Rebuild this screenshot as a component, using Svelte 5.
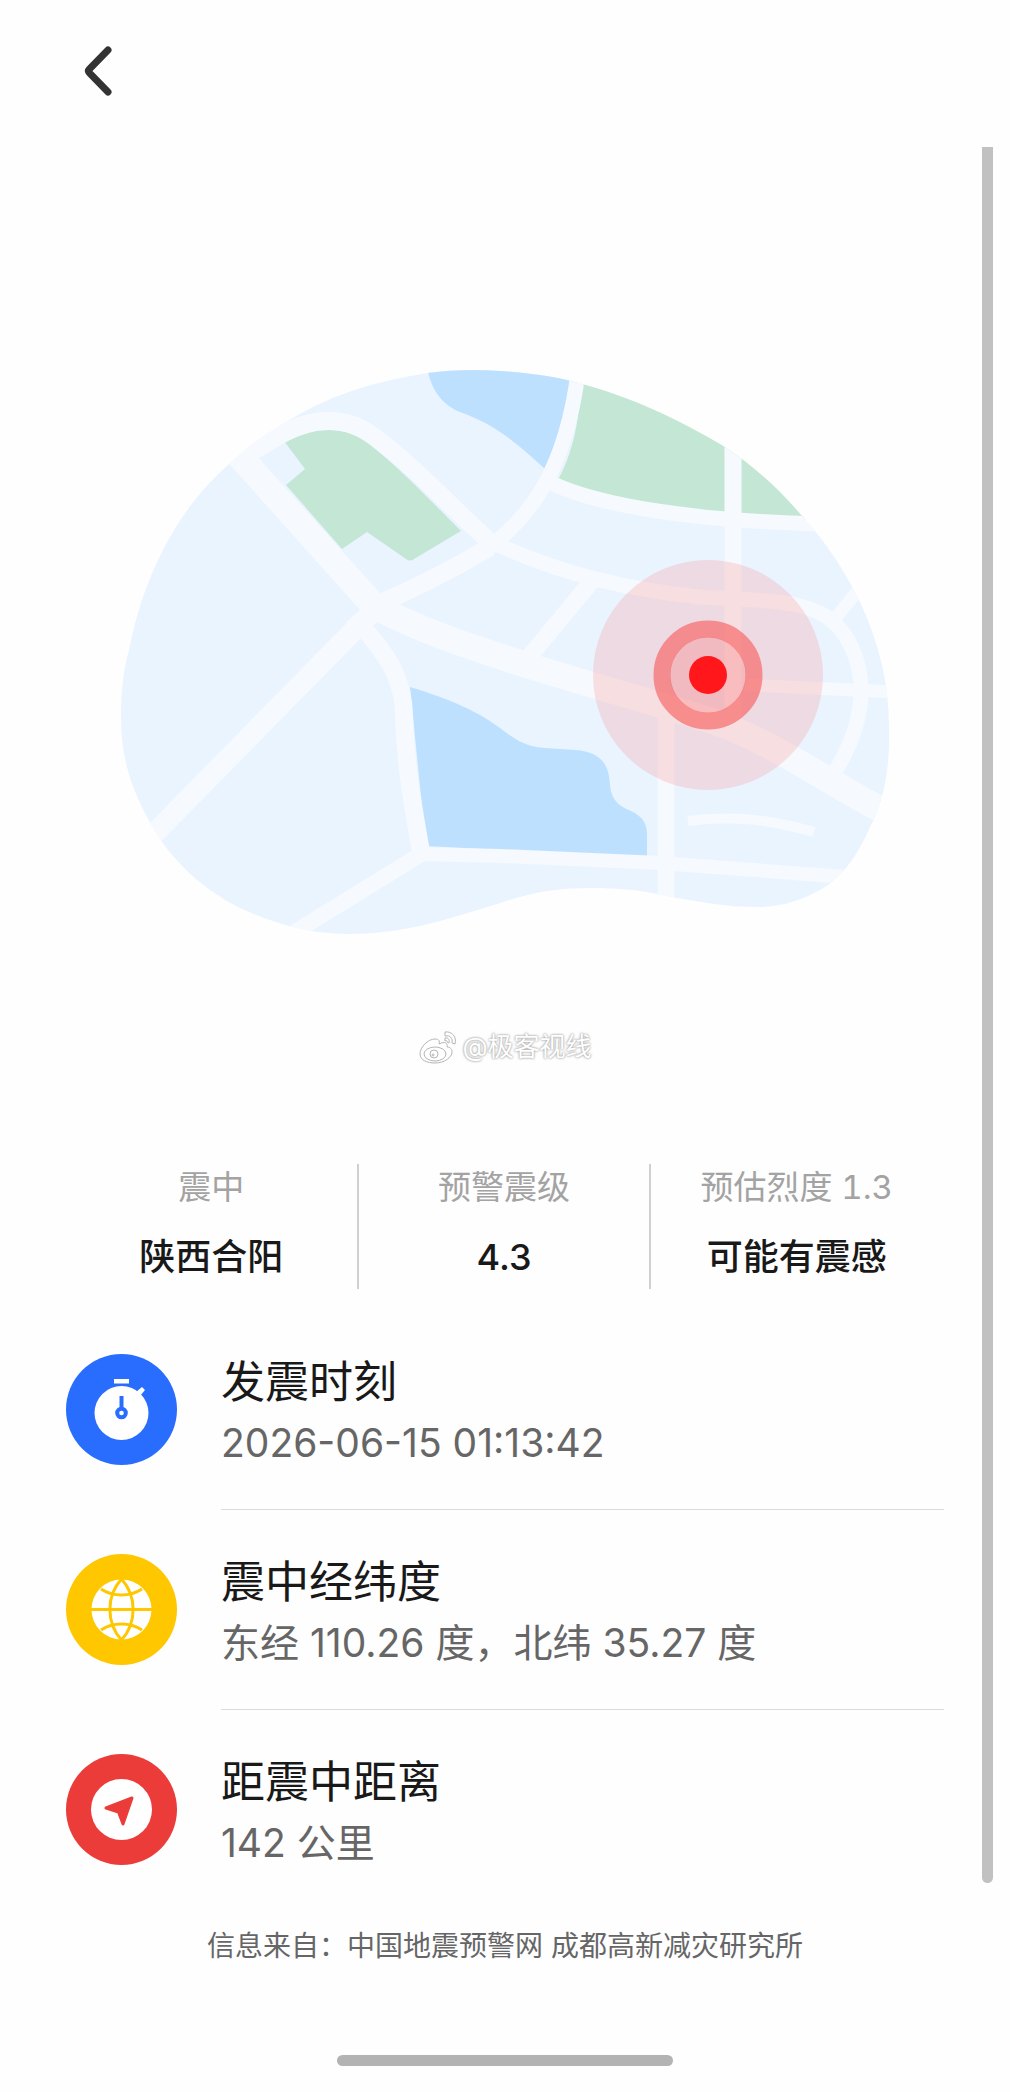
<script>
  const stats = [
    { label: '震中', value: '陕西合阳' },
    { label: '预警震级', value: '4.3' },
    { label: '预估烈度 1.3', value: '可能有震感' }
  ];
  const details = [
    { icon: 'clock', title: '发震时刻', text: '2026-06-15 01:13:42' },
    { icon: 'globe', title: '震中经纬度', text: '东经 110.26 度，北纬 35.27 度' },
    { icon: 'arrow', title: '距震中距离', text: '142 公里' }
  ];
</script>

<div class="page">
  <header>
    <button class="back" type="button" aria-label="返回">
      <svg viewBox="0 0 60 60" aria-hidden="true"><path d="M40 9 L21.500 28 Q19.500 30 21.500 32 L40 51" /></svg>
    </button>
  </header>

  <div class="body">
    <main>
      <svg class="map" viewBox="105 350 800 600" role="img" aria-label="震中位置地图">
        <defs>
          <clipPath id="land">
            <path d="M121 717 C121 690 124 667 129 650 C136 615 146 583 163 550 C180 517 200 490 228 465 C247 447 268 432 293 418 C335 393 375 382 427 373 C450 370 475 369 500 371 C530 373 550 376 571 381 C630 396 680 420 725 447 C755 467 780 490 802 516 C822 538 836 558 850 583 C862 604 871 626 878 650 C886 677 889 703 889 730 C890 773 882 805 870 827 C857 857 843 875 825 887 C802 901 780 907 757 907 C725 907 700 902 667 896 C640 890 620 888 590 888 C555 888 530 893 500 903 C440 922 400 934 347 934 C310 934 275 924 240 908 C205 890 183 870 162 842 C135 800 121 765 121 717Z" />
          </clipPath>
        </defs>
        <g clip-path="url(#land)">
          <path class="ground" d="M105 350H905V950H105Z" />
          <path class="water" d="M426 360 C429 390 443 405 460 412 C497 425 520 446 545 469 L570 440 L580 360Z" />
          <path class="water" d="M410 687 C450 699 480 712 504 731 C520 743 530 747 545 748 L575 750 C600 752 609 763 610 785 C611 800 620 807 631 811 C644 817 647 825 647 835 V857 L426 846Z" />
          <path class="park" d="M284 441 C300 433 313 430 330 430 C345 430 356 434 369 444 C400 468 430 500 461 531 L414 559 Q410 562 406 559 L367 532 L342 549 L286 485 L305 469Z" />
          <path class="park" d="M557 482 C580 440 580 400 582 360 H840 V520 H810 C710 518 630 508 557 482Z" />
          <g class="roads">
            <path class="w26" d="M218 432 L374 606 C425 633 475 648 520 663 C590 685 660 704 715 722 C775 743 835 787 895 817" />
            <path class="w21" d="M140 848 L376 608" />
            <path class="w18" d="M243 457 L272 440 C310 416 345 414 376 438 C415 467 450 506 490 542" />
            <path class="w15" d="M484 538 C550 571 620 589 700 597 C760 601 800 599 827 617 C849 632 861 662 861 690 C861 720 850 747 836 770" />
            <path class="w18" d="M374 606 Q435 580 490 547" />
            <path class="w15" d="M487 549 C530 517 567 470 579 365" />
            <path class="w15" d="M549 482 C600 507 700 521 820 524" />
            <path class="w17" d="M733 430 V732" />
            <path class="w13" d="M745 685 L895 692" />
            <path class="w13" d="M834 620 L872 573" />
            <path class="w17" d="M592 581 L528 658" />
            <path class="w18" d="M353 616 L372 638 C393 664 403 684 404 715 C405 760 411 795 421 852" />
            <path class="w16" d="M423 853 L290 935" />
            <path class="w14" d="M418 854 L500 856 L660 863 L860 878" />
            <path class="w17" d="M666 712 V905" />
            <path class="w10" d="M688 821 C728 816 765 818 814 832" />
          </g>
        </g>
        <circle class="wave" cx="708" cy="675" r="115" />
        <circle class="ring" cx="708" cy="675" r="46" />
        <circle class="core" cx="708" cy="675" r="38" />
        <circle class="dot" cx="708" cy="675" r="19" />
      </svg>

      <p class="credit">
        <svg viewBox="0 0 40 36" aria-hidden="true">
          <path d="M17 10 C10 10 2 18 2 25 C2 31 9 34 17 34 C27 34 34 28 34 23 C34 19 31 18 29 18 C30 14 27 12 21 15 C22 12 21 10 17 10Z" />
          <ellipse cx="17" cy="25" rx="11" ry="7" />
          <circle cx="16" cy="25" r="4" /><circle cx="15" cy="26" r="1" />
          <path d="M27 3 C34 2 39 8 37 15 L34 14 C35 9 32 6 27 7Z M27 9 C30 8 32 11 31 14 L29 13 C29 12 29 11 27 12Z" />
        </svg>
        <span>@极客视线</span>
      </p>

      <dl class="stats">
        {#each stats as s}
          <div><dt>{s.label}</dt><dd>{s.value}</dd></div>
        {/each}
      </dl>

      <ul class="details">
        {#each details as d}
          <li>
            <svg class="badge {d.icon}" viewBox="0 0 111 111" aria-hidden="true">
              <circle class="disc" cx="55.500" cy="55.500" r="55.500" />
              {#if d.icon === 'clock'}
                <circle class="white" cx="55.500" cy="59" r="27" />
                <path class="white" d="M48 25H63V29.500H48Z M70 38 L76 33 L79 36 L74 42Z" />
                <path class="hand" d="M55.500 42V55" />
                <circle class="pivot" cx="55.500" cy="59" r="4.300" />
              {:else if d.icon === 'globe'}
                <circle class="white" cx="55.500" cy="55.500" r="30" />
                <path class="grid" d="M25 55.500H86 M55.500 25 C40 42 40 69 55.500 86 C71 69 71 42 55.500 25 M35 35 C47 43 64 43 76 35 M35 76 C47 68 64 68 76 76" />
              {:else}
                <circle class="white" cx="55.500" cy="55.500" r="30.500" />
                <path class="pointer" d="M40 54 L66 44 L57 70 L52.500 58Z" />
              {/if}
            </svg>
            <div class="info">
              <h2>{d.title}</h2>
              <p>{d.text}</p>
            </div>
          </li>
        {/each}
      </ul>
    </main>
    <div class="scrollbar"></div>
  </div>

  <footer>
    <p>信息来自：中国地震预警网 成都高新减灾研究所</p>
    <div class="home"></div>
  </footer>
</div>

<style>
  :global(body) { margin: 0; background: #fefefe; }
  .page {
    min-height: 100vh;
    display: flex;
    flex-direction: column;
    box-sizing: border-box;
    font-family: Inter, "Noto Sans CJK SC", sans-serif;
    color: #191919;
  }
  p, h2, dl, dd, ul { margin: 0; padding: 0; }
  header { padding: 41px 68px 46px; }
  .back { display: block; width: 60px; height: 60px; padding: 0; border: 0; background: none; }
  .back svg { display: block; width: 60px; height: 60px; }
  .back path { fill: none; stroke: #333; stroke-width: 7; stroke-linecap: round; }
  .body { display: flex; padding-right: 17px; }
  main { flex: 1; min-width: 0; padding: 203px 38px 0 66px; }
  .scrollbar { width: 11px; background: #c1c1c1; border-radius: 0 0 6px 6px; }

  .map { display: block; width: 100%; max-width: 800px; margin: 0 auto; }
  .ground { fill: #e9f4ff; }
  .water { fill: #bee0ff; }
  .park { fill: #c4e7d5; }
  .roads path { fill: none; stroke: #f6f9fe; }
  .roads .w10 { stroke-width: 10; }
  .roads .w13 { stroke-width: 13; }
  .roads .w14 { stroke-width: 14; }
  .roads .w15 { stroke-width: 15; }
  .roads .w16 { stroke-width: 16; }
  .roads .w17 { stroke-width: 17; }
  .roads .w18 { stroke-width: 18; }
  .roads .w21 { stroke-width: 21; }
  .roads .w26 { stroke-width: 26; }
  .wave { fill: rgba(255, 114, 110, 0.2); }
  .ring { fill: none; stroke: rgba(250, 60, 60, 0.5); stroke-width: 17; }
  .core { fill: rgba(255, 90, 90, 0.25); }
  .dot { fill: #ff171b; }

  .credit {
    display: flex;
    align-items: center;
    justify-content: center;
    gap: 4px;
    height: 40px;
    margin-top: 77px;
    font-size: 26px;
    line-height: 40px;
    color: #fff;
    text-shadow: 0 0 2px #999, 0 0 3px #bbb;
  }
  .credit svg { width: 40px; height: 36px; fill: #fff; stroke: #b5b5b5; stroke-width: 1; }

  .stats { display: grid; grid-template-columns: repeat(3, 1fr); margin-top: 97px; text-align: center; }
  .stats div { padding-bottom: 7px; border-right: 2px solid #d0d0d0; }
  .stats div:last-child { border-right-color: transparent; }
  dt { font-size: 33px; line-height: 46px; color: #a3a3a3; font-variant-numeric: tabular-nums; }
  dd { margin-top: 22px; font-size: 36px; line-height: 50px; font-weight: 500; }

  .details { margin-top: 21px; list-style: none; }
  .details li { display: flex; gap: 44px; }
  .badge { flex: none; width: 111px; height: 111px; margin-top: 44px; }
  .info { flex: 1; min-width: 0; padding: 41px 0 36px; border-bottom: 1px solid #dcdcdc; }
  li:last-child .info { padding-bottom: 10px; border-bottom: 0; }
  h2 { font-size: 44px; line-height: 62px; font-weight: 400; }
  .info p { font-size: 39px; line-height: 60px; color: #666; }
  .white { fill: #fff; }
  .clock .disc { fill: #296dff; }
  .globe .disc { fill: #fec700; }
  .arrow .disc { fill: #eb3c3a; }
  .hand { stroke: #296dff; stroke-width: 4; }
  .pivot { fill: #fff; stroke: #296dff; stroke-width: 4; }
  .grid { fill: none; stroke: #fec700; stroke-width: 3; }
  .pointer { fill: #eb3c3a; stroke: #eb3c3a; stroke-width: 3; stroke-linejoin: round; }

  footer { padding-bottom: 26px; text-align: center; }
  footer p { margin-top: 43px; font-size: 28px; line-height: 40px; color: #666; }
  .home { width: 336px; height: 11px; margin: 89px auto 0; border-radius: 6px; background: #b3b3b3; }
</style>
